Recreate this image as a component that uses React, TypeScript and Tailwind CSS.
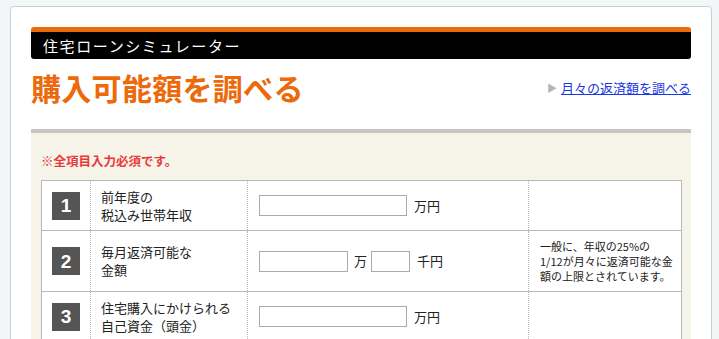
import React from 'react';

const jp = { fontFamily: '"Noto Sans CJK JP", "Noto Sans", sans-serif' };

function Badge({ n }: { n: number }) {
  return (
    <div className="mx-auto flex h-[28px] w-[28px] items-center justify-center bg-[#555555] text-[19px] font-bold leading-none text-white" style={{ fontFamily: '"Liberation Sans", Arial, sans-serif' }}>
      {n}
    </div>
  );
}

function Field({ w }: { w: string }) {
  return <input type="text" className={`h-[21px] ${w} border border-[#aaaaaa] bg-white`} />;
}

export default function App() {
  return (
    <div className="min-h-screen bg-[#f3f6f7] pl-[10px] pt-[6px] pr-[7px]" style={jp}>
      <div className="rounded-[4px] border border-[#c6d1d5] bg-white px-[20px] pb-[40px] pt-[20px]">
        {/* header */}
        <div className="rounded-[3px] border-t-[5px] border-[#ec6a0c] bg-black">
          <div className="flex h-[27px] items-center pl-[12px] text-[15px] leading-none tracking-[1.6px] text-white">
            住宅ローンシミュレーター
          </div>
        </div>

        <div className="flex items-end justify-between pb-[26px] pt-[12px]">
          <h1 className="text-[30px] font-bold leading-[32px] tracking-[0.3px] text-[#ec6a0c]">購入可能額を調べる</h1>
          <div className="flex items-center pb-[9px] text-[13px] leading-none">
            <span className="mr-[4px] text-[10px] text-[#b5b5b5]">▶</span>
            <a href="#" className="text-[#1a38e0] underline">月々の返済額を調べる</a>
          </div>
        </div>

        {/* form area */}
        <div className="border-t-[4px] border-[#c5c5c5] bg-[#f6f3e8] px-[10px] pb-[30px] pt-[19px]">
          <p className="mb-[11px] text-[12.5px] font-bold leading-[17px] text-[#e8393a]">※全項目入力必須です。</p>
          <table className="w-full table-fixed border-collapse border border-[#b8b8b8] bg-white text-[13px] text-[#222]">
            <colgroup>
              <col className="w-[49px]" />
              <col className="w-[157px]" />
              <col className="w-[281px]" />
              <col className="w-[153px]" />
            </colgroup>
            <tbody>
              <tr className="h-[50px] border-b border-[#b8b8b8]">
                <td className="border-r border-dotted border-r-[#b8b8b8]"><Badge n={1} /></td>
                <td className="border-r border-dotted border-r-[#b8b8b8] pl-[10px] leading-[18px]">前年度の<br />税込み世帯年収</td>
                <td className="border-r border-dotted border-r-[#b8b8b8] pl-[11px]">
                  <div className="flex items-center">
                    <Field w="w-[148px]" />
                    <span className="ml-[7px]">万円</span>
                  </div>
                </td>
                <td></td>
              </tr>
              <tr className="h-[61px] border-b border-[#b8b8b8]">
                <td className="border-r border-dotted border-r-[#b8b8b8]"><Badge n={2} /></td>
                <td className="border-r border-dotted border-r-[#b8b8b8] pl-[10px] leading-[18px]">毎月返済可能な<br />金額</td>
                <td className="border-r border-dotted border-r-[#b8b8b8] pl-[11px]">
                  <div className="flex items-center">
                    <Field w="w-[89px]" />
                    <span className="ml-[6px]">万</span>
                    <span className="ml-[4px]"><Field w="w-[39px]" /></span>
                    <span className="ml-[7px]">千円</span>
                  </div>
                </td>
                <td className="whitespace-nowrap pl-[11px] text-[11px] leading-[15px]">一般に、年収の25%の<br />1/12が月々に返済可能な金<br />額の上限とされています。</td>
              </tr>
              <tr className="h-[50px] border-b border-[#b8b8b8]">
                <td className="border-r border-dotted border-r-[#b8b8b8]"><Badge n={3} /></td>
                <td className="border-r border-dotted border-r-[#b8b8b8] pl-[10px] leading-[18px]">住宅購入にかけられる<br />自己資金（頭金）</td>
                <td className="border-r border-dotted border-r-[#b8b8b8] pl-[11px]">
                  <div className="flex items-center">
                    <Field w="w-[148px]" />
                    <span className="ml-[7px]">万円</span>
                  </div>
                </td>
                <td></td>
              </tr>
            </tbody>
          </table>
        </div>
      </div>
    </div>
  );
}
